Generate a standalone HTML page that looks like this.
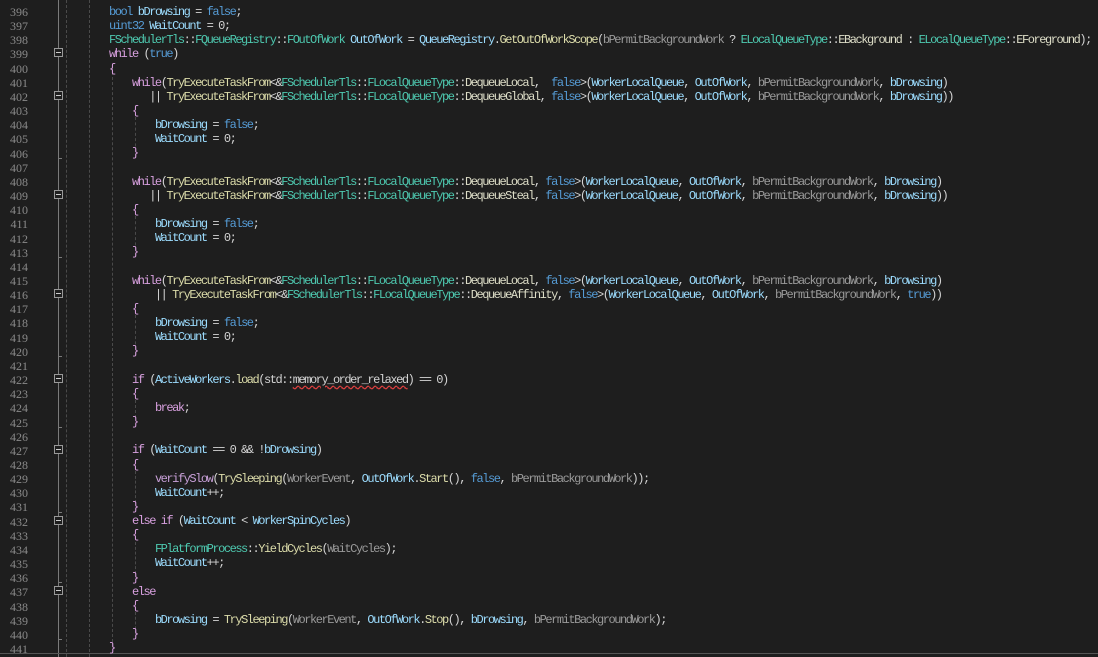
<!DOCTYPE html>
<html><head><meta charset="utf-8"><style>
html,body{margin:0;padding:0;background:#1e1e1e;width:1098px;height:657px;overflow:hidden;position:relative}
.ln{position:absolute;left:0;width:28px;text-align:right;color:#8a8a8a;font:12px/14.155px "Liberation Serif","Liberation Mono",monospace;top:5px}
.code{position:absolute;left:109px;top:5px;font:12px/14.155px "Liberation Mono",monospace;letter-spacing:-1.46px;color:#d4d4d4}
.code div{height:14.155px;white-space:pre}
.k{color:#569cd6}.c{color:#d8a0df}.t{color:#4ec9b0}.f{color:#dcdcaa}.v{color:#9cdcfe}.p{color:#9a9a9a}.e{color:#dedec8}.m{color:#c8a0d8}
.sq{text-decoration:underline wavy #e04040;text-underline-offset:2px}
.g{position:absolute;width:0;border-left:1px dashed #4a4a4a}
.fold{position:absolute;left:54px;width:7px;height:7px;border:1px solid #999;background:#1e1e1e;box-sizing:content-box}
.fold:after{content:"";position:absolute;left:1px;top:3px;width:5px;height:1px;background:#ccc}
.vl{position:absolute;left:58px;top:0;width:1px;height:657px;background:#7a7a7a}
.tk{position:absolute;left:58px;width:4px;height:1px;background:#7a7a7a}
</style></head><body>
<div class="vl"></div>
<div class="g" style="left:66px;top:0;height:657px"></div>
<div class="g" style="left:89px;top:0;height:657px"></div>
<div class="g" style="left:112px;top:67px;height:580px"></div>
<div class="g" style="left:135px;top:117px;height:40px"></div>
<div class="g" style="left:135px;top:216px;height:40px"></div>
<div class="g" style="left:135px;top:315px;height:40px"></div>
<div class="g" style="left:135px;top:400px;height:18px"></div>
<div class="g" style="left:135px;top:471px;height:32px"></div>
<div class="g" style="left:135px;top:542px;height:32px"></div>
<div class="g" style="left:135px;top:612px;height:22px"></div>
<div class="fold" style="top:48px"></div>
<div class="fold" style="top:91px"></div>
<div class="fold" style="top:190px"></div>
<div class="fold" style="top:289px"></div>
<div class="fold" style="top:374px"></div>
<div class="fold" style="top:445px"></div>
<div class="fold" style="top:516px"></div>
<div class="fold" style="top:586px"></div>
<div class="tk" style="top:158px"></div><div class="tk" style="top:257px"></div><div class="tk" style="top:356px"></div><div class="tk" style="top:427px"></div><div class="tk" style="top:512px"></div><div class="tk" style="top:582px"></div><div class="tk" style="top:639px"></div>
<div style="position:absolute;left:0;top:653px;width:1098px;height:1px;background:#555"></div>
<div class="ln">396<br>397<br>398<br>399<br>400<br>401<br>402<br>403<br>404<br>405<br>406<br>407<br>408<br>409<br>410<br>411<br>412<br>413<br>414<br>415<br>416<br>417<br>418<br>419<br>420<br>421<br>422<br>423<br>424<br>425<br>426<br>427<br>428<br>429<br>430<br>431<br>432<br>433<br>434<br>435<br>436<br>437<br>438<br>439<br>440<br>441</div>
<div class="code">
<div><span class="k">bool</span> <span class="v">bDrowsing</span> = <span class="k">false</span>;</div>
<div><span class="k">uint32</span> <span class="v">WaitCount</span> = 0;</div>
<div><span class="t">FSchedulerTls</span>::<span class="t">FQueueRegistry</span>::<span class="t">FOutOfWork</span> <span class="v">OutOfWork</span> = <span class="v">QueueRegistry</span>.<span class="f">GetOutOfWorkScope</span>(<span class="p">bPermitBackgroundWork</span> ? <span class="t">ELocalQueueType</span>::<span class="e">EBackground</span> : <span class="t">ELocalQueueType</span>::<span class="e">EForeground</span>);</div>
<div><span class="c">while</span> (<span class="k">true</span>)</div>
<div><span class="c">{</span></div>
<div>    <span class="c">while</span>(<span class="f">TryExecuteTaskFrom</span>&lt;&amp;<span class="t">FSchedulerTls</span>::<span class="t">FLocalQueueType</span>::<span class="e">DequeueLocal</span>,  <span class="k">false</span>&gt;(<span class="v">WorkerLocalQueue</span>, <span class="v">OutOfWork</span>, <span class="p">bPermitBackgroundWork</span>, <span class="v">bDrowsing</span>)</div>
<div>       || <span class="f">TryExecuteTaskFrom</span>&lt;&amp;<span class="t">FSchedulerTls</span>::<span class="t">FLocalQueueType</span>::<span class="e">DequeueGlobal</span>, <span class="k">false</span>&gt;(<span class="v">WorkerLocalQueue</span>, <span class="v">OutOfWork</span>, <span class="p">bPermitBackgroundWork</span>, <span class="v">bDrowsing</span>))</div>
<div>    <span class="c">{</span></div>
<div>        <span class="v">bDrowsing</span> = <span class="k">false</span>;</div>
<div>        <span class="v">WaitCount</span> = 0;</div>
<div>    <span class="c">}</span></div>
<div></div>
<div>    <span class="c">while</span>(<span class="f">TryExecuteTaskFrom</span>&lt;&amp;<span class="t">FSchedulerTls</span>::<span class="t">FLocalQueueType</span>::<span class="e">DequeueLocal</span>, <span class="k">false</span>&gt;(<span class="v">WorkerLocalQueue</span>, <span class="v">OutOfWork</span>, <span class="p">bPermitBackgroundWork</span>, <span class="v">bDrowsing</span>)</div>
<div>       || <span class="f">TryExecuteTaskFrom</span>&lt;&amp;<span class="t">FSchedulerTls</span>::<span class="t">FLocalQueueType</span>::<span class="e">DequeueSteal</span>, <span class="k">false</span>&gt;(<span class="v">WorkerLocalQueue</span>, <span class="v">OutOfWork</span>, <span class="p">bPermitBackgroundWork</span>, <span class="v">bDrowsing</span>))</div>
<div>    <span class="c">{</span></div>
<div>        <span class="v">bDrowsing</span> = <span class="k">false</span>;</div>
<div>        <span class="v">WaitCount</span> = 0;</div>
<div>    <span class="c">}</span></div>
<div></div>
<div>    <span class="c">while</span>(<span class="f">TryExecuteTaskFrom</span>&lt;&amp;<span class="t">FSchedulerTls</span>::<span class="t">FLocalQueueType</span>::<span class="e">DequeueLocal</span>, <span class="k">false</span>&gt;(<span class="v">WorkerLocalQueue</span>, <span class="v">OutOfWork</span>, <span class="p">bPermitBackgroundWork</span>, <span class="v">bDrowsing</span>)</div>
<div>        || <span class="f">TryExecuteTaskFrom</span>&lt;&amp;<span class="t">FSchedulerTls</span>::<span class="t">FLocalQueueType</span>::<span class="e">DequeueAffinity</span>, <span class="k">false</span>&gt;(<span class="v">WorkerLocalQueue</span>, <span class="v">OutOfWork</span>, <span class="p">bPermitBackgroundWork</span>, <span class="k">true</span>))</div>
<div>    <span class="c">{</span></div>
<div>        <span class="v">bDrowsing</span> = <span class="k">false</span>;</div>
<div>        <span class="v">WaitCount</span> = 0;</div>
<div>    <span class="c">}</span></div>
<div></div>
<div>    <span class="c">if</span> (<span class="v">ActiveWorkers</span>.<span class="f">load</span>(std::<span class="sq">memory_order_relaxed</span>) == 0)</div>
<div>    <span class="c">{</span></div>
<div>        <span class="c">break</span>;</div>
<div>    <span class="c">}</span></div>
<div></div>
<div>    <span class="c">if</span> (<span class="v">WaitCount</span> == 0 &amp;&amp; !<span class="v">bDrowsing</span>)</div>
<div>    <span class="c">{</span></div>
<div>        <span class="m">verifySlow</span>(<span class="f">TrySleeping</span>(<span class="p">WorkerEvent</span>, <span class="v">OutOfWork</span>.<span class="f">Start</span>(), <span class="k">false</span>, <span class="p">bPermitBackgroundWork</span>));</div>
<div>        <span class="v">WaitCount</span>++;</div>
<div>    <span class="c">}</span></div>
<div>    <span class="c">else if</span> (<span class="v">WaitCount</span> &lt; <span class="v">WorkerSpinCycles</span>)</div>
<div>    <span class="c">{</span></div>
<div>        <span class="t">FPlatformProcess</span>::<span class="f">YieldCycles</span>(<span class="p">WaitCycles</span>);</div>
<div>        <span class="v">WaitCount</span>++;</div>
<div>    <span class="c">}</span></div>
<div>    <span class="c">else</span></div>
<div>    <span class="c">{</span></div>
<div>        <span class="v">bDrowsing</span> = <span class="f">TrySleeping</span>(<span class="p">WorkerEvent</span>, <span class="v">OutOfWork</span>.<span class="f">Stop</span>(), <span class="v">bDrowsing</span>, <span class="p">bPermitBackgroundWork</span>);</div>
<div>    <span class="c">}</span></div>
<div><span class="c">}</span></div>
</div>
</body></html>
